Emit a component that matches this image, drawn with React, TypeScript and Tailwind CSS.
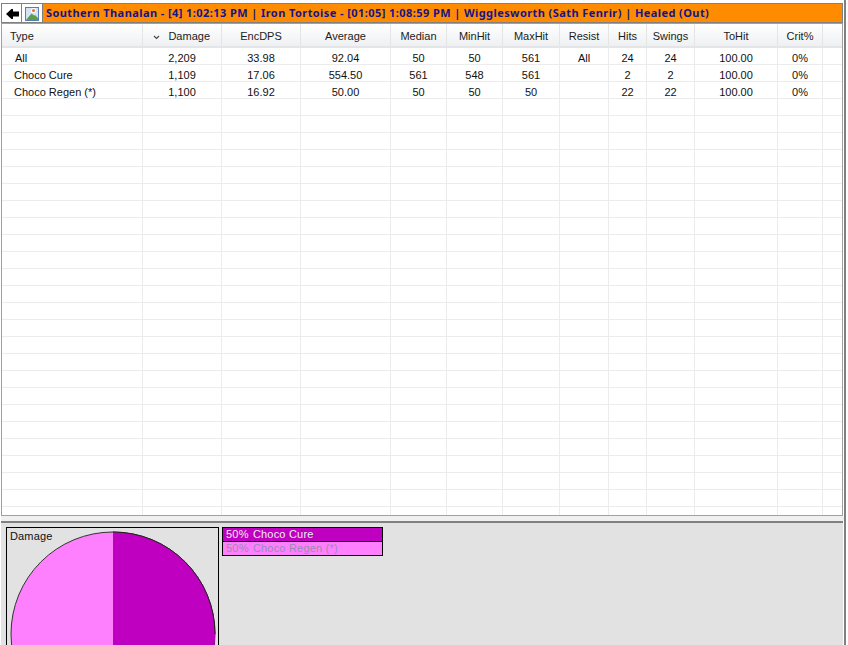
const columns = [
  { name: "Type", width: 141, align: "text-left pl-2" },
  { name: "Damage", width: 79, align: "text-right pr-[11px]" },
  { name: "EncDPS", width: 79, align: "text-center" },
  { name: "Average", width: 90, align: "text-center" },
  { name: "Median", width: 56, align: "text-center" },
  { name: "MinHit", width: 56, align: "text-center" },
  { name: "MaxHit", width: 57, align: "text-center" },
  { name: "Resist", width: 49, align: "text-center" },
  { name: "Hits", width: 38, align: "text-center" },
  { name: "Swings", width: 48, align: "text-center" },
  { name: "ToHit", width: 83, align: "text-center" },
  { name: "Crit%", width: 45, align: "text-center" },
  { name: "", width: 20, align: "text-center" },
];

const rows = [
  ["All", "2,209", "33.98", "92.04", "50", "50", "561", "All", "24", "24", "100.00", "0%", ""],
  ["Choco Cure", "1,109", "17.06", "554.50", "561", "548", "561", "", "2", "2", "100.00", "0%", ""],
  ["Choco Regen (*)", "1,100", "16.92", "50.00", "50", "50", "50", "", "22", "22", "100.00", "0%", ""],
];

const emptyRows = Array.from({ length: 25 }, () => columns.map(() => ""));

const App = () => {
  return (
    <div className="w-[848px] h-[645px] overflow-hidden bg-white font-['Liberation_Sans',sans-serif] text-black">
      <div className="w-[846px] h-full border-r-2 border-[#808080] flex flex-col pl-px pt-[3px]">
        <div className="w-[842px] h-5 flex shrink-0">
          <div className="w-5 h-5 flex items-center justify-center border border-[#808080] border-r-0 pl-0.5 pt-0.5 bg-white">
            <svg width="13" height="10" viewBox="0 0 13 10">
              <path d="M0 5 L5.5 0 H7 V2.5 H13 V7.5 H7 V10 H5.5 Z" fill="#000" />
            </svg>
          </div>
          <div className="w-[21px] h-5 flex items-center justify-center border border-[#808080] border-r-0 bg-white pt-0.5">
            <svg width="14" height="14" viewBox="0 0 14 14">
              <rect x="0.5" y="0.5" width="13" height="13" fill="#d4e4f8" stroke="#5a7fb8" />
              <circle cx="8.5" cy="3.5" r="2.6" fill="#fff" />
              <circle cx="8.5" cy="3.5" r="1.6" fill="#e8743c" />
              <path d="M1 13 L6.5 6.5 L9 8.5 L10 8 L13 11 V13 Z" fill="#5a9e48" />
            </svg>
          </div>
          <div className="flex-1 h-5 bg-[#ff8c00] border border-[#808080] flex items-center pl-[3px] font-['Noto_Sans',sans-serif] font-bold text-[11px] tracking-[0.42px] text-[#14148c] whitespace-pre">
            Southern Thanalan - [4] 1:02:13 PM | Iron Tortoise - [01:05] 1:08:59 PM | Wigglesworth (Sath Fenrir) | Healed (Out)
          </div>
        </div>

        <div className="w-[842px] h-[493px] shrink-0 border border-[#a0a0a0] overflow-hidden bg-white">
          <div className="flex h-[24px] bg-gradient-to-b from-white to-[#eef0f2] border-b-2 border-[#e3e5e8]">
            {columns.map((col, i) => (
              <div
                key={i}
                style={{ width: col.width }}
                className={`relative shrink-0 h-full border-r border-[#e5e5e5] text-[11px] leading-[24px] text-[#1c1c1c] ${col.align}`}
              >
                {col.name}
                {col.name === "Damage" && (
                  <svg className="absolute left-[10px] top-[11px]" width="7" height="5" viewBox="0 0 7 5">
                    <path d="M1 1 L3.5 3.5 L6 1" fill="none" stroke="#444" strokeWidth="1.1" />
                  </svg>
                )}
              </div>
            ))}
          </div>
          {[...rows, ...emptyRows].map((row, r) => (
            <div key={r} className="flex h-[17px] border-b border-[#ececec]">
              {row.map((cell, c) => (
                <div
                  key={c}
                  style={{ width: columns[c].width }}
                  className={`shrink-0 h-full border-r border-[#ececec] text-[11px] leading-[20px] text-[#111] ${c === 0 ? "text-left" : "text-center"} ${c === 0 ? (r === 0 ? "pl-[13px]" : "pl-3") : ""}`}
                >
                  {cell}
                </div>
              ))}
            </div>
          ))}
        </div>

        <div className="w-[843px] h-[5px] shrink-0 bg-[#f0f0f0]" />

        <div className="w-[842px] flex-1 bg-[#e2e2e2] border-t-2 border-[#808080] flex items-start pl-[5px] pt-[4px] gap-[3px] overflow-hidden">
          <div className="relative w-[213px] h-[200px] shrink-0 border border-black">
            <svg className="absolute left-[3px] top-[3px]" width="206" height="206" viewBox="0 0 206 206">
              <circle cx="103" cy="103" r="102" fill="#ff80ff" stroke="#333" strokeWidth="1" />
              <path d="M103 1 A102 102 0 0 1 103 205 Z" fill="#c000c0" />
              <path d="M103 1 A102 102 0 0 1 205 103" fill="none" stroke="#222" strokeWidth="1" />
            </svg>
            <span className="absolute left-[3px] top-px text-[11px] leading-[15px] tracking-[0.15px] text-[#111]">Damage</span>
          </div>
          <div className="w-[161px] shrink-0 border border-black text-[11px] tracking-[0.2px] leading-[13px] whitespace-pre">
            <div className="h-[13px] bg-[#c000c0] text-[#eee] pl-[3px]">50% <span className="ml-px">Choco Cure</span></div>
            <div className="h-[14px] bg-[#ff80ff] text-[#9a8ab0] pl-[3px] border-t border-black">50% <span className="ml-px">Choco Regen (*)</span></div>
          </div>
        </div>
      </div>
    </div>
  );
};

export default App;
